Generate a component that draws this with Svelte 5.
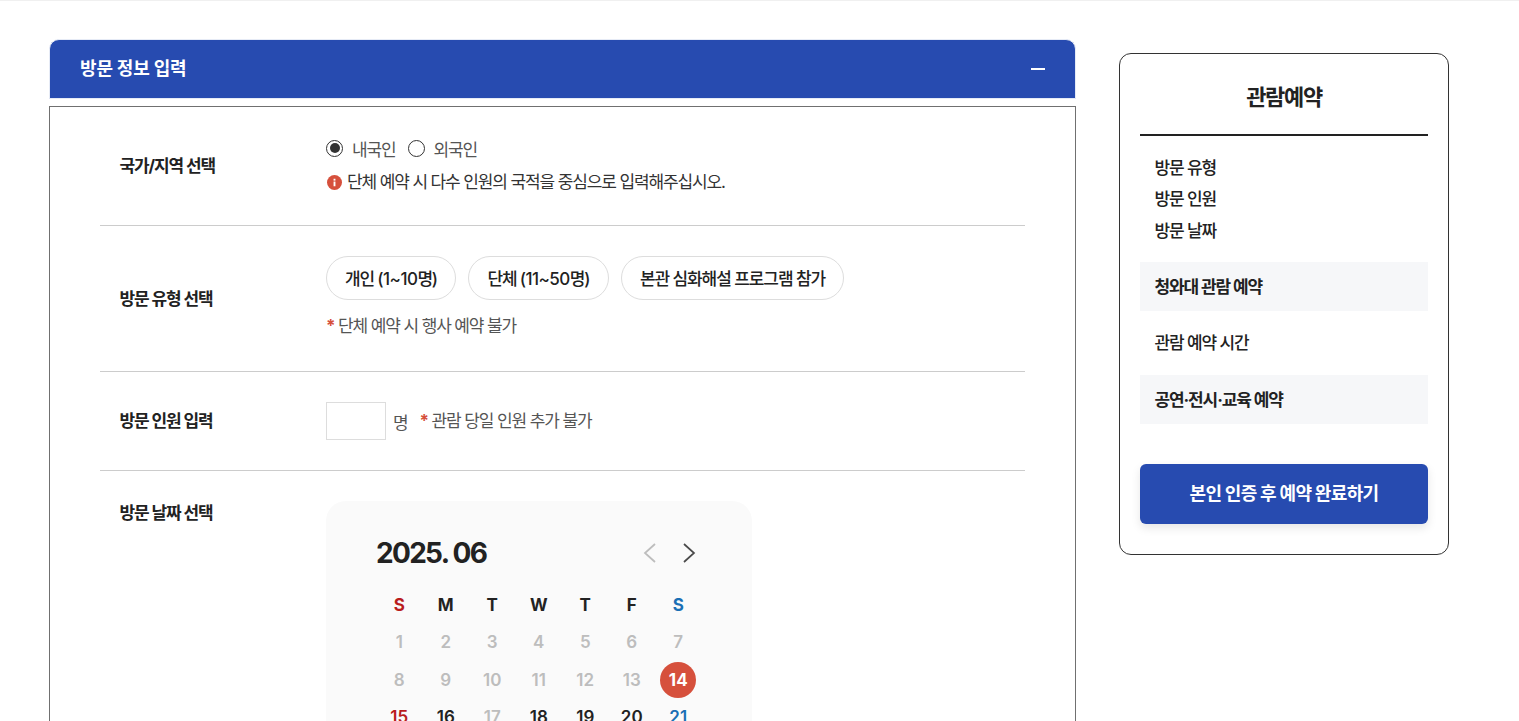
<script>
  const dows = [['S','sun'],['M',''],['T',''],['W',''],['T',''],['F',''],['S','sat']];
  const weeks = [
    [[1,'off'],[2,'off'],[3,'off'],[4,'off'],[5,'off'],[6,'off'],[7,'off']],
    [[8,'off'],[9,'off'],[10,'off'],[11,'off'],[12,'off'],[13,'off'],[14,'today']],
    [[15,'sun'],[16,''],[17,'off'],[18,''],[19,''],[20,''],[21,'sat']],
    [[22,'sun'],[23,''],[24,'off'],[25,''],[26,''],[27,''],[28,'sat']]
  ];
</script>

<div class="page">
  <main class="main">
    <section class="form">
      <header class="bar">
        <h2>방문 정보 입력</h2>
        <span class="minus"></span>
      </header>
      <div class="panel">
        <div class="row r1">
          <div class="label">국가/지역 선택</div>
          <div class="field">
            <div class="radios">
              <span class="radio on"></span><span class="rl">내국인</span>
              <span class="radio"></span><span class="rl">외국인</span>
            </div>
            <p class="info">
              <svg width="15" height="15" viewBox="0 0 16 16"><circle cx="8" cy="8" r="8" fill="#d6503c"/><rect x="7" y="7" width="2" height="5" fill="#fff"/><rect x="7" y="4" width="2" height="2" fill="#fff"/></svg>
              단체 예약 시 다수 인원의 국적을 중심으로 입력해주십시오.
            </p>
          </div>
        </div>
        <div class="row r2">
          <div class="label">방문 유형 선택</div>
          <div class="field">
            <div class="pills">
              <button class="pill">개인 <span class="lat">(1~10</span>명)</button>
              <button class="pill two">단체 <span class="lat">(11~50</span>명)</button>
              <button class="pill wide">본관 심화해설 프로그램 참가</button>
            </div>
            <p class="note"><b>*</b> 단체 예약 시 행사 예약 불가</p>
          </div>
        </div>
        <div class="row r3">
          <div class="label">방문 인원 입력</div>
          <div class="field inline">
            <span class="box"></span>
            <span class="unit">명</span>
            <p class="note"><b>*</b> 관람 당일 인원 추가 불가</p>
          </div>
        </div>
        <div class="row r4">
          <div class="label">방문 날짜 선택</div>
          <div class="field">
            <div class="cal">
              <div class="cal-head">
                <span class="ym">2025. 06</span>
                <div class="arrows">
                  <svg width="13" height="20" viewBox="0 0 13 20"><path d="M12 1 L2 10 L12 19" fill="none" stroke="#bdbdbd" stroke-width="1.8"/></svg>
                  <svg width="13" height="20" viewBox="0 0 13 20"><path d="M1 1 L11 10 L1 19" fill="none" stroke="#4a4a4a" stroke-width="1.7"/></svg>
                </div>
              </div>
              <div class="grid dow">
                {#each dows as d}<span class={d[1]}>{d[0]}</span>{/each}
              </div>
              {#each weeks as w}
                <div class="grid days">
                  {#each w as c}<span class={c[1]}>{c[0]}</span>{/each}
                </div>
              {/each}
            </div>
          </div>
        </div>
      </div>
    </section>

    <aside class="side">
      <h3>관람예약</h3>
      <ul class="list">
        <li>방문 유형</li>
        <li>방문 인원</li>
        <li>방문 날짜</li>
      </ul>
      <div class="band">청와대 관람 예약</div>
      <div class="plain">관람 예약 시간</div>
      <div class="band">공연·전시·교육 예약</div>
      <button class="cta">본인 인증 후 예약 완료하기</button>
    </aside>
  </main>
</div>

<style>
  :global(body) { margin: 0; background: #fff; }
  .page {
    height: 721px; overflow: hidden; box-sizing: border-box;
    border-top: 1px solid #f0f0f0;
    font-family: "Inter", "Noto Sans CJK KR", "Noto Sans", sans-serif;
    letter-spacing: -0.07em; color: #222;
  }
  .main { display: flex; align-items: flex-start; padding: 38px 0 0 49px; gap: 43px; }
  .form { width: 1027px; flex: none; }
  .bar {
    height: 60px; box-sizing: border-box; background: #274bb0; border: 1px solid #e6ebf6; border-radius: 10px 10px 0 0;
    display: flex; align-items: center; justify-content: space-between; padding: 0 30px 0;
  }
  .bar h2 { margin: -4px 0 0; font-size: 18px; font-weight: 700; color: #fff; letter-spacing: -0.01em; }
  .minus { width: 14px; height: 2px; background: #fff; }
  .panel { margin-top: 7px; border: 1px solid #707070; padding: 0 50px; height: 700px; }
  .row { display: flex; border-bottom: 1px solid #ccc; box-sizing: border-box; }
  .r1 { height: 119px; }
  .r2 { height: 146px; }
  .r3 { height: 99px; }
  .r4 { border: 0; }
  .label { width: 226px; padding-left: 19.5px; box-sizing: border-box; font-size: 17px; line-height: 24px; font-weight: 700; color: #222; flex: none; }
  .r1 .label { padding-top: 47px; }
  .r2 .label { padding-top: 61px; }
  .r3 .label { padding-top: 37px; }
  .r4 .label { padding-top: 30px; }
  .field { flex: 1; }
  .radios { display: flex; align-items: center; padding-top: 29px; height: 24px; font-size: 17px; color: #555; }
  .radio { width: 15px; height: 15px; border: 1px solid #333; border-radius: 50%; position: relative; flex: none; background: #fff; }
  .radio.on::after { content: ""; position: absolute; inset: 2.5px; background: #333; border-radius: 50%; }
  .rl { margin: 0 12px 0 9px; }
  .info { display: flex; align-items: center; gap: 5px; margin: 10px 0 0 1px; font-size: 17px; line-height: 24px; color: #333; }
  .pills { display: flex; gap: 12px; padding-top: 30px; }
  .pill {
    height: 44px; padding: 0 18px 2px; border: 1px solid #ddd; border-radius: 22px; background: #fff;
    font: 500 17px "Inter", "Noto Sans CJK KR", sans-serif; letter-spacing: -0.07em; color: #222;
  }
  .pill.two { padding: 0 18.5px 2px; }
  .pill.wide { letter-spacing: -0.063em; }
  .lat { letter-spacing: -0.03em; }
  .note { margin: 0; font-size: 17px; line-height: 24px; color: #555; }
  .note b { color: #d6503c; font-weight: 700; }
  .r2 .note { margin-top: 14px; }
  .inline { display: flex; align-items: center; height: 38px; padding-top: 30px; }
  .box { width: 58px; height: 36px; border: 1px solid #ddd; flex: none; }
  .unit { margin: 0 12px 0 7px; font-size: 17px; color: #555; }
  .cal { margin-top: 30px; width: 426px; height: 400px; background: #fafafa; border-radius: 20px; box-sizing: border-box; padding: 30px 50px 0 50px; font-family: "Inter", sans-serif; letter-spacing: 0; }
  .cal-head { display: flex; justify-content: space-between; align-items: center; height: 44px; }
  .ym { font-size: 28px; font-weight: 700; color: #222; letter-spacing: -0.06em; }
  .arrows { display: flex; gap: 27px; margin-right: 6px; }
  .grid { display: grid; grid-template-columns: repeat(7, 46.5px); text-align: center; }
  .grid span { display: flex; align-items: center; justify-content: center; height: 37.5px; }
  .dow { margin-top: 11px; font-size: 17px; font-weight: 700; color: #222; }
  .days { font-size: 17px; font-weight: 600; color: #222; }
  .off { color: #bdbdbd; }
  .sun { color: #b91c1c; }
  .sat { color: #1a6fb5; }
  .days .today { color: #fff; font-weight: 700; background: #d6503c; border-radius: 50%; width: 36px; height: 36px; margin: 1px auto 0; }
  .side { width: 330px; height: 502px; flex: none; margin-top: 14px; border: 1px solid #333; border-radius: 12px; box-sizing: border-box; padding: 0 20px; }
  .side h3 { margin: 0; height: 80px; line-height: 87px; border-bottom: 2px solid #222; font-size: 22px; font-weight: 700; text-align: center; color: #222; letter-spacing: -0.06em; }
  .list { list-style: none; margin: 0; padding: 16.5px 14.5px 14.5px; }
  .list li { height: 31.5px; line-height: 31px; font-size: 17px; font-weight: 500; color: #222; }
  .band, .plain { height: 49px; line-height: 50px; padding: 0 14.5px; font-size: 17px; font-weight: 700; color: #222; }
  .band { background: #f6f7f9; }
  .plain { height: 64px; line-height: 64px; font-weight: 500; }
  .cta { display: block; width: 100%; height: 60px; margin-top: 40px; padding-bottom: 4px; border: 0; border-radius: 6px; background: #274bb0; color: #fff; font: 600 18px "Noto Sans CJK KR", sans-serif; letter-spacing: -0.035em; box-shadow: 0 4px 10px rgba(0,0,0,.1); }
</style>
